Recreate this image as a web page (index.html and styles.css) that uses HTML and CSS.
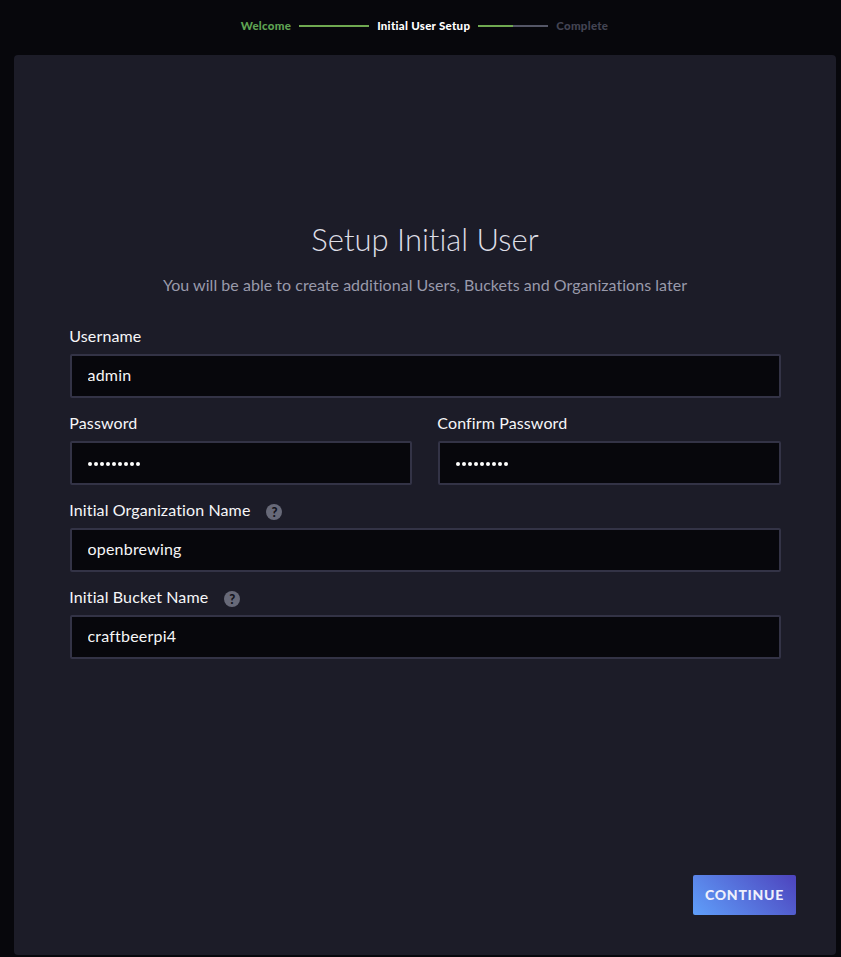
FILE: index.html
```html
<!DOCTYPE html>
<html lang="en">
<head>
<meta charset="utf-8">
<title>Setup Initial User</title>
<link rel="stylesheet" href="styles.css">
</head>
<body>
<nav class="steps">
  <span class="step step-done">Welcome</span>
  <span class="bar bar-full"></span>
  <span class="step step-current">Initial User Setup</span>
  <span class="bar bar-half"></span>
  <span class="step step-todo">Complete</span>
</nav>
<main class="panel">
  <h1 class="title">Setup Initial User</h1>
  <p class="subtitle">You will be able to create additional Users, Buckets and Organizations later</p>
  <form class="form">
    <div class="field">
      <label class="label" for="user">Username</label>
      <input class="input" id="user" type="text" value="admin">
    </div>
    <div class="row">
      <div class="field">
        <label class="label">Password</label>
        <div class="input secret"><i></i><i></i><i></i><i></i><i></i><i></i><i></i><i></i><i></i></div>
      </div>
      <div class="field">
        <label class="label">Confirm Password</label>
        <div class="input secret"><i></i><i></i><i></i><i></i><i></i><i></i><i></i><i></i><i></i></div>
      </div>
    </div>
    <div class="field">
      <label class="label" for="org">Initial Organization Name<b class="help">?</b></label>
      <input class="input" id="org" type="text" value="openbrewing">
    </div>
    <div class="field">
      <label class="label" for="bucket">Initial Bucket Name<b class="help">?</b></label>
      <input class="input" id="bucket" type="text" value="craftbeerpi4">
    </div>
  </form>
  <button class="continue" type="button">CONTINUE</button>
</main>
</body>
</html>
```
FILE: styles.css
```css
* { box-sizing: border-box; }
body {
  margin: 0;
  height: 957px;
  padding: 0 5px 0 14px;
  overflow: hidden;
  background: #07070c;
  color: #f6f6f8;
  font: 16px/20px Lato, sans-serif;
  font-variant-ligatures: none;
}
.steps {
  display: flex;
  height: 55px;
  padding: 0 1px 3px 0;
  align-items: center;
  justify-content: center;
  gap: 8px;
  font-size: 11.5px;
  font-weight: 900;
  letter-spacing: 0.28px;
}
.step-done { color: #5fa353; }
.step-current { color: #fff; }
.step-todo { color: #434453; }
.bar { width: 70px; height: 2px; background: #6fa851; }
.bar-half { background: linear-gradient(90deg, #6fa851 50%, #545667 50%); }
.panel {
  display: flex;
  flex-direction: column;
  height: 900px;
  padding: 164px 55px 0;
  border-radius: 4px;
  background: #1c1c28;
}
.title {
  margin: 0;
  color: #dedee6;
  font-size: 31px;
  line-height: 40px;
  font-weight: 300;
  text-align: center;
}
.subtitle {
  margin: 16px 0 0;
  color: #999aab;
  letter-spacing: 0.03px;
  text-align: center;
}
.form {
  display: flex;
  flex-direction: column;
  gap: 15px;
  margin: 31px 0 0 1px;
}
.label {
  display: flex;
  align-items: flex-start;
  height: 28px;
  margin-left: -0.7px;
  letter-spacing: 0.12px;
}
.row { display: grid; grid-template-columns: 342px 1fr; gap: 26px; }
.input {
  display: block;
  width: 100%;
  height: 44px;
  padding: 0 15.5px 3px;
  border: 2px solid #333346;
  border-radius: 2px;
  background: #07070c;
  color: #f6f6f8;
  font: inherit;
  letter-spacing: 0.2px;
}
.secret { display: flex; align-items: center; gap: 2px; padding: 2px 16px 0; }
.secret i { width: 4px; height: 4px; border-radius: 50%; background: #fff; }
.help {
  width: 16px;
  height: 16px;
  margin: 4px 0 0 16px;
  border-radius: 50%;
  background: #676978;
  color: #13131c;
  font-size: 13px;
  line-height: 16px;
  font-weight: 900;
  text-align: center;
}
.continue {
  align-self: flex-end;
  width: 103px;
  height: 40px;
  margin: 216px -15px 0 0;
  padding: 0;
  border: 0;
  border-radius: 2px;
  background: linear-gradient(45deg, #5f9ffa, #4d43bd);
  color: #eef0fc;
  font: 900 14px/20px Lato, sans-serif;
  letter-spacing: 0.7px;
}
```
